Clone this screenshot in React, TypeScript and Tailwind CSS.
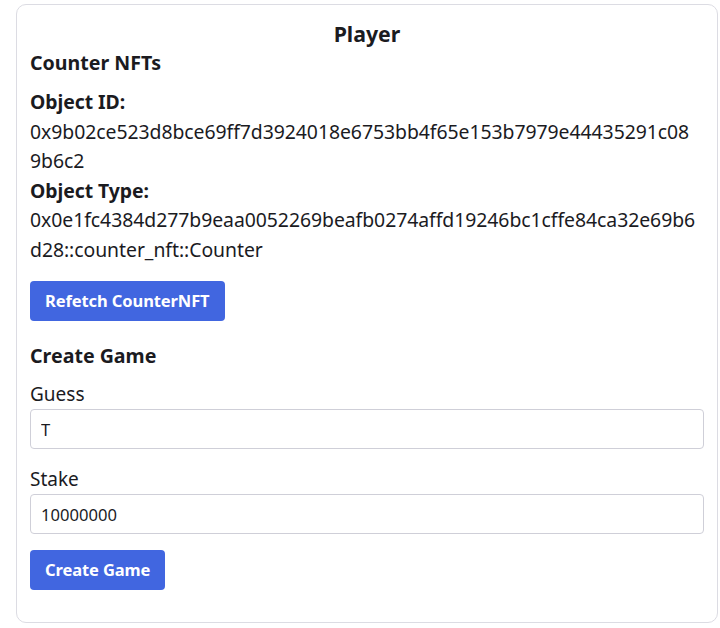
import React from "react";

export default function App() {
  const font = { fontFamily: '"Noto Sans", "Open Sans", sans-serif' };
  return (
    <div className="w-[720px] h-[628px] bg-white text-[#1b1b1f]" style={font}>
      <div className="pt-[4px] pl-[16px]">
        <div className="w-[702px] border border-[#dcdce3] rounded-[10px] pl-[13px] pr-[13px] pt-[14px] h-[619px]">
          <div className="text-center font-bold text-[21.3px] leading-[30px]">Player</div>
          <div className="font-bold text-[19.6px] leading-[28px]">Counter NFTs</div>
          <div className="mt-[10px] text-[19.4px] leading-[29.5px] tracking-[-0.05px]">
            <div className="font-bold">Object ID:</div>
            <div className="whitespace-nowrap">0x9b02ce523d8bce69ff7d3924018e6753bb4f65e153b7979e44435291c08</div>
            <div>9b6c2</div>
            <div className="font-bold">Object Type:</div>
            <div className="whitespace-nowrap">0x0e1fc4384d277b9eaa0052269beafb0274affd19246bc1cffe84ca32e69b6</div>
            <div>d28::counter_nft::Counter</div>
          </div>
          <div className="h-[17px]" />
          <button className="block h-[40px] px-[15px] rounded-[4px] bg-[#4166e0] text-white font-bold text-[16.5px] tracking-[-0.1px]">
            Refetch CounterNFT
          </button>
          <div className="mt-[21px] font-bold text-[19.6px] leading-[28px]">Create Game</div>
          <div className="mt-[11px] text-[19px] leading-[26px]">Guess</div>
          <input
            className="mt-[2px] block w-full h-[40px] border border-[#cfcfd8] rounded-[4px] px-[10px] text-[16.6px] outline-none"
            defaultValue="T"
            style={font}
          />
          <div className="mt-[17px] text-[19px] leading-[26px]">Stake</div>
          <input
            className="mt-[2px] block w-full h-[40px] border border-[#cfcfd8] rounded-[4px] px-[10px] text-[16.6px] outline-none"
            defaultValue="10000000"
            style={font}
          />
          <div className="h-[16px]" />
          <button className="block h-[40px] px-[15px] rounded-[4px] bg-[#4166e0] text-white font-bold text-[16.5px] tracking-[-0.1px]">
            Create Game
          </button>
        </div>
      </div>
    </div>
  );
}
